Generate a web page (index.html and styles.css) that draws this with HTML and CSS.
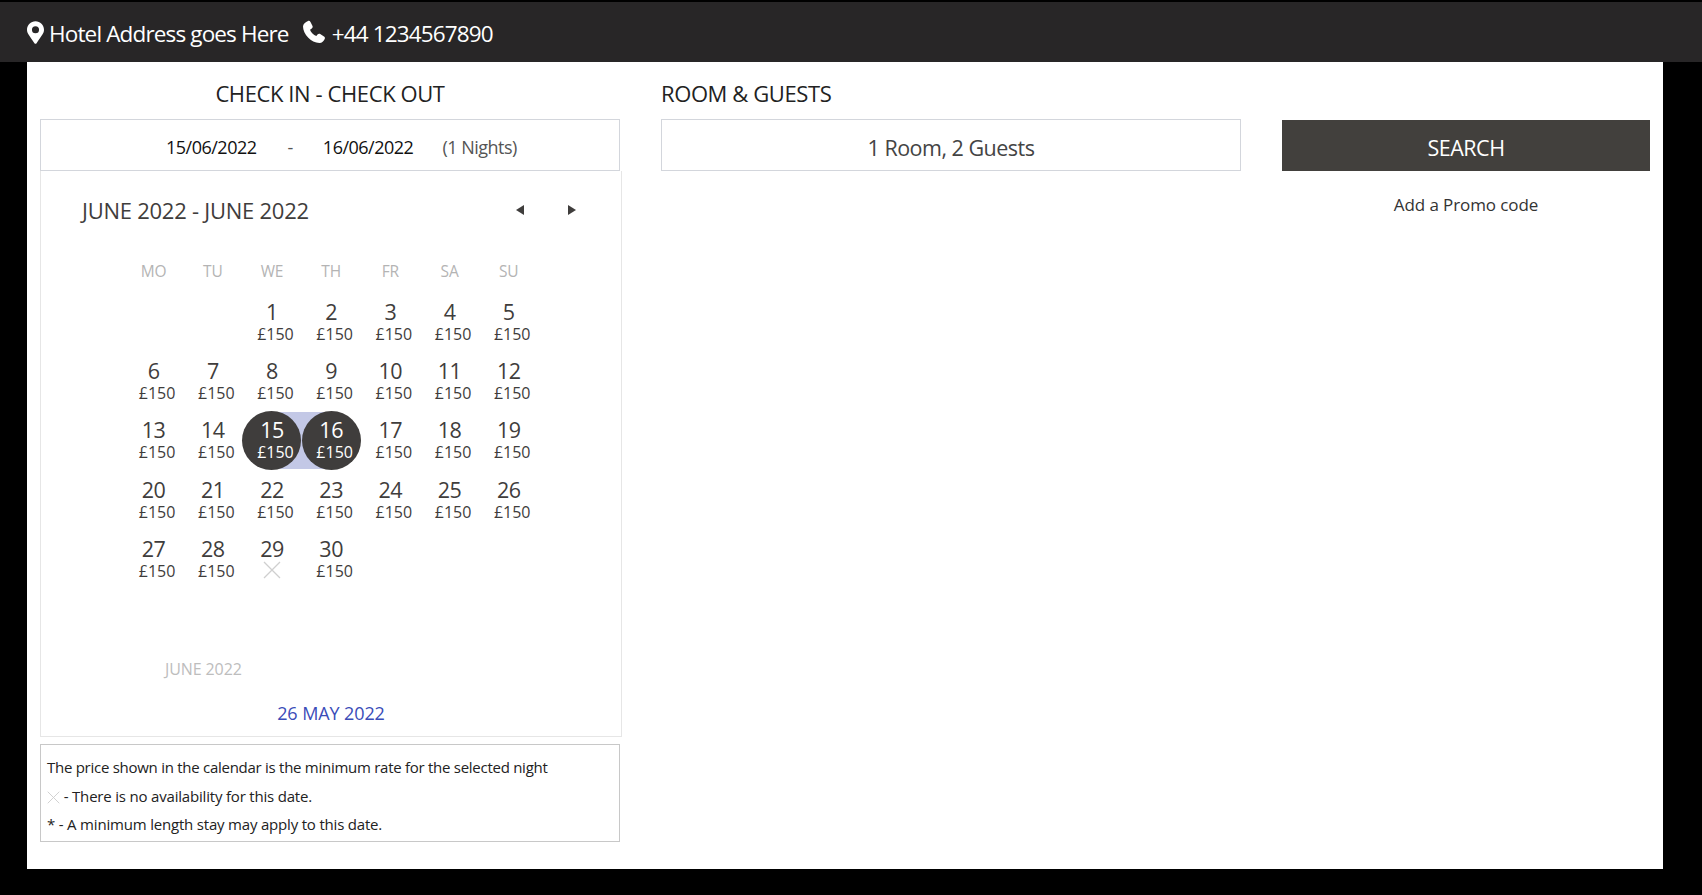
FILE: index.html
```html
<!DOCTYPE html>
<html lang="en">
<head>
  <meta charset="UTF-8" />
  <title>Hotel booking</title>
  <link rel="stylesheet" href="styles.css">
</head>
<body>
  <!-- Top bar -->
  <header class="topbar">
    <svg class="icon-pin" viewBox="0 0 384 512"><path d="M172 502C27 291 0 263 0 192 0 86 86 0 192 0s192 86 192 192c0 71-27 99-172 310-10 14-30 14-40 0zm20-230a80 80 0 1 0 0-160 80 80 0 0 0 0 160z"/></svg>
    <span class="topbar-text">Hotel Address goes Here</span>
    <svg class="icon-phone" viewBox="0 0 24 24"><path d="M6 1C7 .5 8 1 8.500 2L10.500 6C11 7 10.500 8 9.500 8.700L8 9.700C9 12.500 11.500 15 14.300 16L15.500 14.600C16.200 13.700 17.200 13.400 18.200 14L22 16.400C23 17 23.200 18 22.700 19C21.700 21 20 23 17.500 23C9 23 1 14 1 6.500C1 4 3.500 2 6 1Z"/></svg>
    <span class="topbar-text">+44 1234567890</span>
  </header>

  <main class="booking">
    <!-- Dates column -->
    <section class="col">
      <h2 class="col-title center">CHECK IN - CHECK OUT</h2>
      <div class="date-box">
        <span class="date">15/06/2022</span>
        <span class="date-sep">-</span>
        <span class="date">16/06/2022</span>
        <span class="nights">(1 Nights)</span>
      </div>

      <div class="calendar">
        <div class="cal-head">
          <span class="cal-title">JUNE 2022 - JUNE 2022</span>
          <div class="cal-nav">
            <svg viewBox="0 0 10 12"><path d="M9 1v10L1 6z"/></svg>
            <svg viewBox="0 0 10 12"><path d="M1 1v10l8-5z"/></svg>
          </div>
        </div>

        <div class="cal-grid">
          <div class="dow">MO</div><div class="dow">TU</div><div class="dow">WE</div><div class="dow">TH</div><div class="dow">FR</div><div class="dow">SA</div><div class="dow">SU</div>

          <div class="day"></div>
          <div class="day"></div>
          <div class="day"><b>1</b><i>£150</i></div>
          <div class="day"><b>2</b><i>£150</i></div>
          <div class="day"><b>3</b><i>£150</i></div>
          <div class="day"><b>4</b><i>£150</i></div>
          <div class="day"><b>5</b><i>£150</i></div>

          <div class="day"><b>6</b><i>£150</i></div>
          <div class="day"><b>7</b><i>£150</i></div>
          <div class="day"><b>8</b><i>£150</i></div>
          <div class="day"><b>9</b><i>£150</i></div>
          <div class="day"><b>10</b><i>£150</i></div>
          <div class="day"><b>11</b><i>£150</i></div>
          <div class="day"><b>12</b><i>£150</i></div>

          <div class="day"><b>13</b><i>£150</i></div>
          <div class="day"><b>14</b><i>£150</i></div>
          <div class="day selected start"><b>15</b><i>£150</i></div>
          <div class="day selected end"><b>16</b><i>£150</i></div>
          <div class="day"><b>17</b><i>£150</i></div>
          <div class="day"><b>18</b><i>£150</i></div>
          <div class="day"><b>19</b><i>£150</i></div>

          <div class="day"><b>20</b><i>£150</i></div>
          <div class="day"><b>21</b><i>£150</i></div>
          <div class="day"><b>22</b><i>£150</i></div>
          <div class="day"><b>23</b><i>£150</i></div>
          <div class="day"><b>24</b><i>£150</i></div>
          <div class="day"><b>25</b><i>£150</i></div>
          <div class="day"><b>26</b><i>£150</i></div>

          <div class="day"><b>27</b><i>£150</i></div>
          <div class="day"><b>28</b><i>£150</i></div>
          <div class="day"><b>29</b><svg class="cross" viewBox="0 0 18 18"><path d="M1 1l16 16M17 1L1 17"/></svg></div>
          <div class="day"><b>30</b><i>£150</i></div>
        </div>

        <div class="cal-month">JUNE 2022</div>
        <div class="cal-today">26 MAY 2022</div>
      </div>

      <div class="notes">
        <p>The price shown in the calendar is the minimum rate for the selected night</p>
        <p><svg class="cross small" viewBox="0 0 18 18"><path d="M1 1l16 16M17 1L1 17"/></svg> - There is no availability for this date.</p>
        <p>* - A minimum length stay may apply to this date.</p>
      </div>
    </section>

    <!-- Guests column -->
    <section class="col">
      <h2 class="col-title">ROOM &amp; GUESTS</h2>
      <div class="room-box">1 Room, 2 Guests</div>
    </section>

    <!-- Search column -->
    <section class="col col-search">
      <button class="search-btn">SEARCH</button>
      <div class="promo">Add a Promo code</div>
    </section>
  </main>
</body>
</html>
```

FILE: styles.css
```css
* { box-sizing: border-box; }
body {
  margin: 0;
  padding-top: 2px;
  height: 895px;
  overflow: hidden;
  background: #000;
  font-family: "Open Sans", "Noto Sans", sans-serif;
  letter-spacing: -0.5px;
  color: #222;
}

/* top bar */
.topbar {
  height: 60px;
  background: #282627;
  color: #fff;
  display: flex;
  align-items: center;
  padding-left: 27px;
}
.topbar-text { font-size: 22.5px; letter-spacing: -0.85px; padding-top: 2px; }
.icon-pin { width: 17px; height: 23px; fill: #fff; margin-right: 5px; }
.icon-phone { width: 24px; height: 24px; fill: #fff; margin: 0 6px 0 13px; }

/* main panel */
.booking {
  width: 1636px;
  height: 807px;
  margin-left: 27px;
  padding: 0 13px;
  background: #fff;
  display: flex;
  gap: 41px;
}
.col { width: 580px; flex: none; }
.col-search { width: 368px; padding-top: 58px; }
.col-title {
  margin: 0;
  height: 57px;
  padding-top: 16px;
  font-size: 22px;
  line-height: 30px;
  font-weight: 400;
  letter-spacing: -0.4px;
}
.center { text-align: center; }

.date-box, .room-box {
  height: 52px;
  border: 1px solid #d3d6dc;
  display: flex;
  align-items: center;
  padding-top: 4px;
}
.date-box {
  padding-left: 125px;
  font-size: 18px;
  color: #111;
}
.date-sep { margin: 0 30px 0 31px; color: #555; }
.nights { margin-left: 29px; color: #555; }
.room-box {
  justify-content: center;
  font-size: 21.5px;
  color: #444;
}

/* calendar */
.calendar {
  width: 582px;
  height: 566px;
  border: 1px solid #e6e6e6;
  border-top: 0;
}
.cal-head {
  height: 89px;
  padding: 23px 44px 0 41px;
  display: flex;
  justify-content: space-between;
}
.cal-title { font-size: 22px; line-height: 32px; color: #3f3d3c; letter-spacing: -0.25px; }
.cal-nav { display: flex; gap: 42px; padding-top: 10px; }
.cal-nav svg { width: 10px; height: 12px; fill: #3f3d3c; }

.cal-grid {
  margin-left: 83px;
  width: 414px;
  display: grid;
  grid-template-columns: repeat(7, 59.2px);
  grid-template-rows: 33px;
  grid-auto-rows: 59.2px;
}
.dow {
  height: 22px;
  font-size: 15.5px;
  line-height: 22px;
  text-align: center;
  color: #b4b4b4;
  letter-spacing: -0.2px;
}
.day {
  position: relative;
  text-align: center;
  color: #3f3d3c;
  padding-top: 6px;
}
.day b {
  display: block;
  font-weight: 400;
  font-size: 21.5px;
  line-height: 25px;
}
.day i {
  display: block;
  font-style: normal;
  font-size: 16px;
  line-height: 20px;
  padding-left: 7px;
  letter-spacing: 0;
}
.selected { color: #fff; z-index: 0; }
.selected::before {
  content: "";
  position: absolute;
  top: 1px;
  width: 50%;
  height: 57px;
  background: #c3c8e6;
  z-index: -2;
}
.selected.start::before { right: 0; }
.selected.end::before { left: 0; }
.selected::after {
  content: "";
  position: absolute;
  top: 0;
  left: 0;
  width: 59px;
  height: 59px;
  border-radius: 50%;
  background: #3f3d3c;
  z-index: -1;
}
.cross {
  display: block;
  width: 18px;
  height: 18px;
  margin: 0 auto;
  fill: none;
  stroke: #cfcfcf;
  stroke-width: 1.3;
}
.cross.small {
  display: inline-block;
  width: 13px;
  height: 13px;
  margin: 0;
  vertical-align: -2px;
}
.cal-month {
  margin: 69px 0 0 124px;
  font-size: 16px;
  line-height: 22px;
  letter-spacing: -0.1px;
  color: #bdbdbd;
}
.cal-today {
  margin-top: 21px;
  text-align: center;
  font-size: 18px;
  line-height: 24px;
  letter-spacing: -0.1px;
  color: #3a4cb8;
}

/* notes */
.notes {
  height: 98px;
  margin-top: 7px;
  padding: 8px 6px 0;
  border: 1px solid #c8c8c8;
  font-size: 15px;
  letter-spacing: -0.27px;
  color: #222;
}
.notes p { margin: 0; line-height: 28.5px; }
.notes p + p { letter-spacing: -0.19px; }

/* search */
.search-btn {
  display: block;
  width: 100%;
  height: 51px;
  border: 0;
  padding-top: 4px;
  background: #42403d;
  color: #fff;
  font-family: inherit;
  letter-spacing: inherit;
  font-size: 21.5px;
}
.promo {
  margin-top: 22px;
  text-align: center;
  font-size: 17px;
  line-height: 24px;
  letter-spacing: -0.1px;
  color: #333;
}
```
